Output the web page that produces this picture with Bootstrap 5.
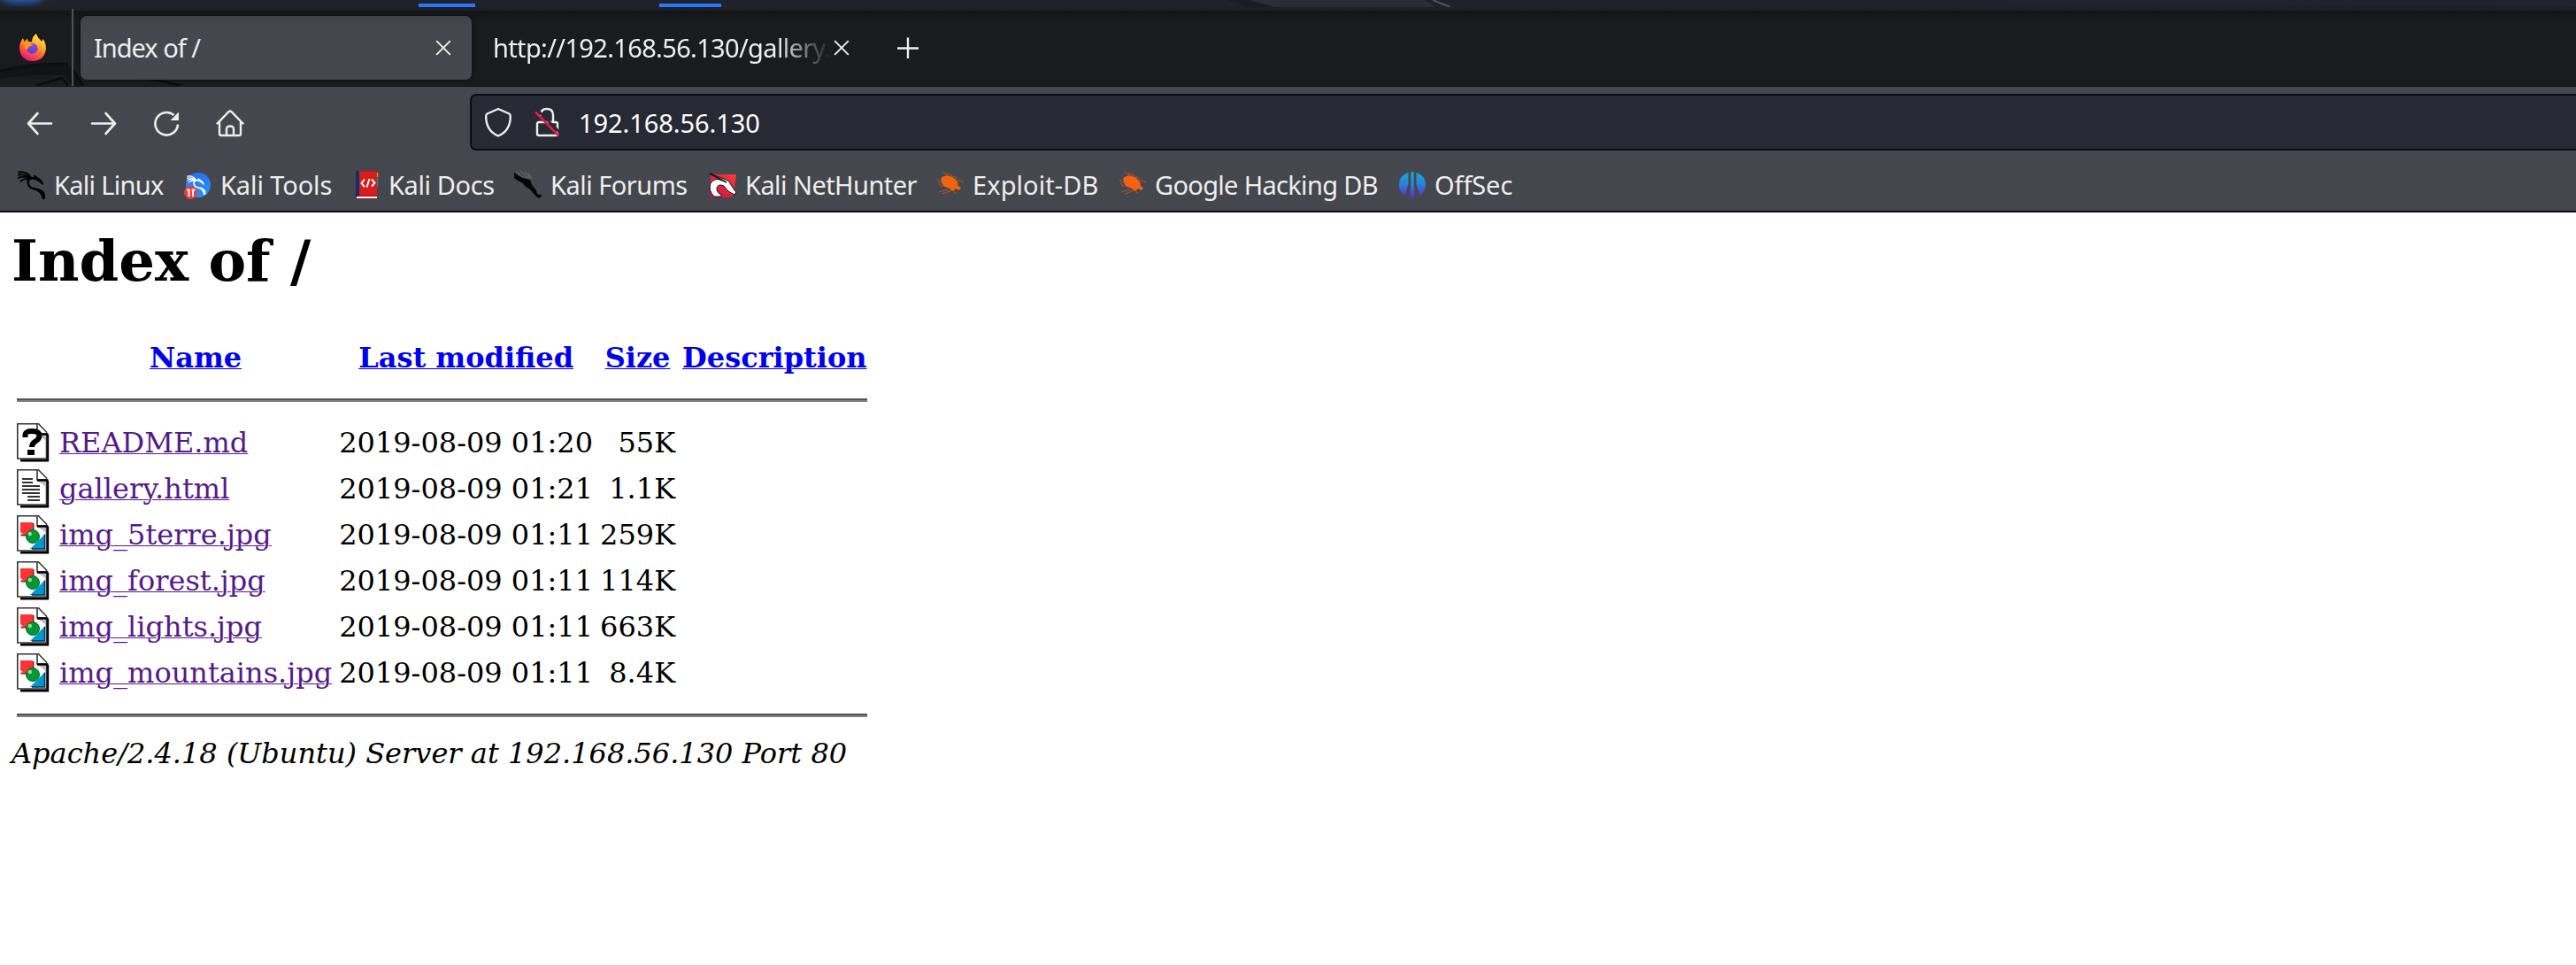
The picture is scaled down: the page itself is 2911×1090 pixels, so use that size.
<!DOCTYPE html>
<html lang="en">
<head>
<meta charset="utf-8">
<title>Index of /</title>
<link href="https://cdn.jsdelivr.net/npm/bootstrap@5.3.0/dist/css/bootstrap.min.css" rel="stylesheet">
<style>
body{background:#fff;color:#000;overflow:hidden}
.chrome{font-family:"Noto Sans","Open Sans",sans-serif;font-size:29px;line-height:36px;color:#eeeeec;white-space:nowrap}
.chrome svg{display:block;flex:none}
.desk{height:8px;background:linear-gradient(90deg,#20222b,#20202a 55%,#22222f)}
.edge{height:4px;background:#1f2023}
.tabs{height:86px;background:linear-gradient(#141519,#1a1b1f 14px);border-bottom:1px solid #101014;position:relative}
.wall{position:absolute;left:0;bottom:0}
.pin{width:83px;height:87px;margin-top:-2px;border-right:2px solid #515257;padding:28px 0 0 21px;position:relative}
.tabx{width:442px;height:72px;border-radius:7px;margin:6px 0 0 8px;background:linear-gradient(#404147,#44474d 12px);padding:0 23px 0 15px;box-shadow:0 0 5px #0008;position:relative;letter-spacing:-1px}
.tab2{height:72px;margin-top:6px;padding-left:24px}
.fade2{width:385px;overflow:hidden;-webkit-mask-image:linear-gradient(90deg,#000 320px,transparent 382px);mask-image:linear-gradient(90deg,#000 320px,transparent 382px);letter-spacing:-.66px}
.plus{margin-left:54px}
.tools{height:82px;background:#44474d;padding:8px 0 0 27px}
.navs{height:64px;width:504px;gap:35.5px}
.urlb{height:64px;border:2px solid #0c0d12;border-right:0;border-radius:7px 0 0 7px;background:#272935;color:#fff;padding-left:13px}
.urlb span{margin:2px 0 0 20px;letter-spacing:-.08px}
.marks{height:58px;background:#44474d;padding:0 0 1px 20px}
.rule{height:2px;background:#0c0c13}
.bm{gap:9px}
.bm:nth-child(1){width:188px;letter-spacing:-.7px}
.bm:nth-child(2){width:190px;letter-spacing:-.1px}
.bm:nth-child(3){width:183px;letter-spacing:-.4px}
.bm:nth-child(4){width:220px;letter-spacing:-.5px}
.bm:nth-child(5){width:257px;letter-spacing:-.56px}
.bm:nth-child(6){width:206px;letter-spacing:.08px}
.bm:nth-child(7){width:316px;letter-spacing:-.68px}
.bm:nth-child(8){letter-spacing:-.1px}
.page{font-family:"DejaVu Serif",serif;font-size:32px;line-height:38px;padding-left:13px}
.page h1{font-size:64px;font-weight:700;line-height:76px;margin:17px 0 43px}
.dir{border-collapse:separate;border-spacing:4px}
.dir td,.dir th{padding:2px;white-space:nowrap}
.dir svg,.blank{display:block;width:40px;height:44px}
.dir a{color:#551a8b;text-decoration:underline;text-decoration-thickness:1px}
.dir th a{color:#00e}
.dir hr{margin:16px 0;height:4px;opacity:1;border:0;border-top:2px solid #555;border-bottom:2px solid #808080}
</style>
</head>
<body>
<svg width="0" height="0" class="position-absolute">
<defs>
<linearGradient id="gf" x1=".8" y1="0" x2=".3" y2="1"><stop offset="0" stop-color="#fff44f"/><stop offset=".45" stop-color="#ff9a1f"/><stop offset=".75" stop-color="#ff4550"/><stop offset="1" stop-color="#e0107a"/></linearGradient>
<linearGradient id="go" gradientUnits="userSpaceOnUse" x1="0" y1="0" x2="0" y2="32"><stop offset="0" stop-color="#0cb4cf"/><stop offset=".5" stop-color="#2f7bd8"/><stop offset="1" stop-color="#6420c8"/></linearGradient>
<linearGradient id="gn" x1="1" y1="0" x2="0" y2="1"><stop offset="0" stop-color="#ff3a35"/><stop offset=".6" stop-color="#e0203c"/><stop offset="1" stop-color="#a8105c"/></linearGradient>
<linearGradient id="gt" x1="0" y1="0" x2="0" y2="1"><stop offset="0" stop-color="#2b6ff6"/><stop offset="1" stop-color="#2497ff"/></linearGradient>
<radialGradient id="gp" cx=".6" cy=".3" r=".7"><stop offset="0" stop-color="#a03cf0"/><stop offset="1" stop-color="#4a4ad0"/></radialGradient>
<symbol id="dragon" viewBox="0 0 32 32"><g fill="none" stroke="currentColor" stroke-linecap="round"><path d="M1 1.500C7 .5 12 3 15 7.500M.8 4.500C6 3.500 10 5 14 7.500M1 8C6 5.500 10 6.500 14 8.500M3.500 11.500C7 8.500 9 8.500 12 9.500" stroke-width="1.800"/><path d="M12 8C17 7.500 23 9 28 14.500M19 6L26.500 11.500" stroke-width="2.300"/><path d="M15 8.500C9 11 11.500 19.500 19.500 20.500C26 21.300 30.500 23.500 30 30.500M18 20C24 21 28 26 28.800 31" stroke-width="2.300"/></g></symbol>
<symbol id="spider" viewBox="0 0 32 32"><g stroke="#b4562a" stroke-width="1" fill="none"><path d="M7 1L15 7M11 2L20 7M1 9L5 14M3 24L13 21M7 26L18 22M20 23L22 26M24 10L31 13M20 6L24 9M2 14L7 18"/></g><path d="M5 9C8 4 15 5 20 8L24 12L25 17L28 19L26 22L22 20L19 23L15 20L8 17L6 13Z" fill="#f2620f"/></symbol>
<symbol id="sheet" viewBox="0 0 40 44"><path d="M4 42.200H34.800V13" fill="none" stroke="#000" stroke-width="2.800"/><path d="M.8 .8H24.500L33.500 10V40H.8Z" fill="#fff" stroke="#333" stroke-width="1.600"/><path d="M23 13L33 14V20L28 16Z" fill="#bbb"/><path d="M23 1V12H34" fill="#fff" stroke="#333" stroke-width="1.600"/><path d="M23 12.500H35.500" stroke="#000" stroke-width="2.500"/></symbol>
<symbol id="pic" viewBox="0 0 40 44"><use href="#sheet" width="40" height="44"/><path d="M4.500 22.500H18.500V9" stroke="#a01818" stroke-width="2" fill="none"/><path d="M4 8H18V22H8L4 19Z" fill="#f33"/><path d="M31.500 21.500V38H15Z" fill="#09c"/><path d="M31.500 21.500V38H17" fill="none" stroke="#036" stroke-width="1.300"/><circle cx="18" cy="24" r="7.500" fill="#093" stroke="#063" stroke-width="1"/><circle cx="14.800" cy="21" r="2.200" fill="#9d9"/></symbol>
</defs>
</svg>
<header class="chrome">
<div class="desk"><svg width="2911" height="8"><defs><filter id="bl" x="-30%" y="-200%" width="160%" height="500%"><feGaussianBlur stdDeviation="3"/></filter></defs><ellipse cx="25" cy="-2" rx="24" ry="6" fill="#2158a8" filter="url(#bl)"/><path d="M1388 0H1412L1440 8H1410Z" fill="#1b1b25"/><path d="M1412 0H1610L1622 8H1440Z" fill="#2d2b34"/><path d="M1619 0L1639 8" stroke="#51525a" stroke-width="2"/><path d="M473 4H537V8H473ZM745 4H815V8H745Z" fill="#2777ff"/></svg></div>
<div class="edge"></div>
<div class="tabs d-flex">
<svg class="wall" width="230" height="27" viewBox="0 0 230 27"><path d="M0 12Q35 3 77 3L93 27H0Z" fill="#121317"/><path d="M0 10Q35 2 77 2" stroke="#0d0e11" stroke-width="3" fill="none"/><path d="M0 19Q35 14 73 15L81 27H0Z" fill="#1b1c20"/><path d="M40 27L70 18L77 27M82 8L94 27M155 18Q182 20 204 27" stroke="#0d0e11" stroke-width="3" fill="none"/></svg>
<div class="pin"><svg width="32" height="32" viewBox="0 0 32 32"><path d="M1 15C1 11 3 8 5 5L6.500 9L10 5.500L11 9H15C15 5 17 2 20 0C21 4 24 6 26 9L27.500 6C30 9 31 13 31 17C30 26 24 31 16 31C7 31 1 25 1 15Z" fill="url(#gf)"/><circle cx="15.500" cy="16.500" r="6.200" fill="url(#gp)"/><path d="M5 11C8 9 11 11 16 11.500C16 14 13 14 11 15.500L10 18C7 17 6 14 5 11Z" fill="#ff980e"/><path d="M16 9C20 8 23 12 22 16C21 13 19 11 16 11Z" fill="#ffbd30"/></svg></div>
<div class="tabx d-flex align-items-center justify-content-between"><span>Index of /</span><svg width="18" height="18" viewBox="0 0 18 18" stroke="#eeeeec" stroke-width="1.900"><path d="M1.200 1.200L16.800 16.800M16.800 1.200L1.200 16.800"/></svg></div>
<div class="tab2 d-flex align-items-center"><span class="fade2">http://192.168.56.130/gallery.</span><svg width="18" height="18" viewBox="0 0 18 18" stroke="#eeeeec" stroke-width="1.900"><path d="M1.200 1.200L16.800 16.800M16.800 1.200L1.200 16.800"/></svg><svg class="plus" width="24" height="24" viewBox="0 0 24 24" stroke="#eeeeec" stroke-width="2.400"><path d="M0 12.500H24M12 .5V24"/></svg></div>
</div>
<div class="tools d-flex">
<div class="navs d-flex align-items-center flex-shrink-0">
<svg width="36" height="36" viewBox="0 0 36 36" fill="none" stroke="#eeeeec" stroke-width="2.600" stroke-linecap="round" stroke-linejoin="round"><path d="M31 19.500H5M15.500 8L5 19.500L15.500 31"/></svg>
<svg width="36" height="36" viewBox="0 0 36 36" fill="none" stroke="#eeeeec" stroke-width="2.600" stroke-linecap="round" stroke-linejoin="round"><path d="M5 19.500H31M20.500 8L31 19.500L20.500 31"/></svg>
<svg width="36" height="36" viewBox="0 0 36 36"><path d="M31 20.500A12.800 12.800 0 1 1 26.500 10" fill="none" stroke="#eeeeec" stroke-width="2.600"/><path d="M32 6.500V16H22.500Z" fill="#eeeeec"/></svg>
<svg width="36" height="36" viewBox="0 0 36 36" fill="none" stroke="#eeeeec" stroke-width="2.400" stroke-linecap="round" stroke-linejoin="round"><path d="M3.500 19.500L16.500 6.200Q18 5 19.500 6.200L32.500 19.500M6 17.500V31Q6 33 8 33H28Q30 33 30 31V17.500M14 33V26Q14 22.500 18 22.500T22 26V33"/></svg>
</div>
<div class="urlb d-flex align-items-center flex-grow-1">
<svg width="34" height="36" viewBox="0 0 34 36" fill="none" stroke="#eeeeec" stroke-width="2.400" stroke-linejoin="round"><path d="M17 3L29.500 8.500Q31 9.300 30.800 12Q30.500 28 17 33.500Q3.500 28 3.200 12Q3 9.300 4.500 8.500Z"/></svg>
<svg class="ms-4" width="30" height="36" viewBox="0 0 30 36" fill="none"><path d="M7 11V10Q7 3 14 3T21 10V17M4 33H24Q26 33 26 31V20Q26 18 24 18H5Q3 18 3 20V31Q3 33 5 33" stroke="#eeeeec" stroke-width="2.400"/><path d="M3 4L30 31" stroke="#272935" stroke-width="3"/><path d="M1 6.500L27.500 33.500" stroke="#ec1443" stroke-width="2.600"/></svg>
<span>192.168.56.130</span>
</div>
</div>
<nav class="marks d-flex align-items-center">
<div class="bm d-flex align-items-center"><svg width="32" height="32" color="#000"><use href="#dragon"/></svg><span>Kali Linux</span></div>
<div class="bm d-flex align-items-center"><svg width="32" height="32" viewBox="0 0 32 32" color="#fff"><circle cx="16" cy="16" r="14" fill="url(#gt)"/><use href="#dragon" x="0" y="5" width="28" height="22"/><circle cx="7.500" cy="24.500" r="7.500" fill="#f03a3e"/><path d="M3 21.500H6.500M8.500 21.500H12.500M5.500 21V29M10 21V29" stroke="#fff" stroke-width="2"/></svg><span>Kali Tools</span></div>
<div class="bm d-flex align-items-center"><svg width="32" height="32" viewBox="0 0 32 32"><path d="M28 2H29.200V7H28Z" fill="#f90"/><path d="M28 8H29.200V13H28Z" fill="#1a9e50"/><path d="M28 13H29.200V18H28Z" fill="#2777ff"/><path d="M4 0H28V32H4Z" fill="#a80f14"/><path d="M8 .5H28V28H8Z" fill="#d81b1b"/><path d="M4 0H8V31H4Z" fill="#132d66"/><path d="M5 29H28V31H5Z" fill="#fff"/><path d="M14 9.500L10.500 14L14 18M22 9.500L25.500 13.500L22 17.500M19.500 9L16.500 18.500" stroke="#fff" stroke-width="2" fill="none"/></svg><span>Kali Docs</span></div>
<div class="bm d-flex align-items-center"><svg width="32" height="32" viewBox="0 0 32 32"><path d="M3 1L11 9M7 0L15 9M12 1L18 9M16 3L20 9" stroke="#606267" stroke-width="1.500"/><path d="M0 2L6 6L10 8L18 10L20 16L25 22L26 26L32 28L28 31L24 28L18 21L12 17L10 14L4 11L0 8Z" fill="#050505"/></svg><span>Kali Forums</span></div>
<div class="bm d-flex align-items-center"><svg width="32" height="32" viewBox="0 0 32 32"><path d="M2 4H31L28 27L24 30H1V24Z" fill="url(#gn)"/><path d="M1 3L22 11L29 22L31 24L29 27L22 23L17 17Q10 14 9 20Q9 25 14 27V29H6Q-1 22 2 14Q7 7 15 11L10 8Z" fill="#fff" stroke="#111" stroke-width="1"/><path d="M1 3L20 13" stroke="#111" stroke-width="1.600"/></svg><span>Kali NetHunter</span></div>
<div class="bm d-flex align-items-center"><svg width="32" height="32"><use href="#spider"/></svg><span>Exploit-DB</span></div>
<div class="bm d-flex align-items-center"><svg width="32" height="32"><use href="#spider"/></svg><span>Google Hacking DB</span></div>
<div class="bm d-flex align-items-center"><svg width="32" height="32" viewBox="0 0 32 32" fill="url(#go)"><path d="M11.500 2V15L7.500 28Q1 23 1 15.500Q1 5 11.500 2ZM20.500 2V15L24.500 28Q31 23 31 15.500Q31 5 20.500 2ZM14.500 1H17.500L18.500 31H13.500Z"/></svg><span>OffSec</span></div>
</nav>
<div class="rule"></div>
</header>
<main class="page">
<h1>Index of /</h1>
<table class="dir">
<tr><th><span class="blank"></span></th><th class="text-center"><a href="#">Name</a></th><th class="text-center"><a href="#">Last modified</a></th><th class="text-center"><a href="#">Size</a></th><th class="text-center"><a href="#">Description</a></th></tr>
<tr><td colspan="5"><hr></td></tr>
<tr><td><svg viewBox="0 0 40 44"><use href="#sheet"/><path d="M9.500 16V12.500Q10.500 9 17 9Q25.500 9 25.500 14Q25.500 18 21 20.500Q17 23 17 27" fill="none" stroke="#000" stroke-width="6"/><path d="M12 30H20V36H12Z"/></svg></td><td><a href="#">README.md</a></td><td>2019-08-09 01:20</td><td class="text-end">55K</td><td></td></tr>
<tr><td><svg viewBox="0 0 40 44"><use href="#sheet"/><path d="M6 11H18M6 15H18M6 19H26M6 23H26M6 27H26M12 31H26M12 35H26" stroke="#333" stroke-width="2"/></svg></td><td><a href="#">gallery.html</a></td><td>2019-08-09 01:21</td><td class="text-end">1.1K</td><td></td></tr>
<tr><td><svg><use href="#pic"/></svg></td><td><a href="#">img_5terre.jpg</a></td><td>2019-08-09 01:11</td><td class="text-end">259K</td><td></td></tr>
<tr><td><svg><use href="#pic"/></svg></td><td><a href="#">img_forest.jpg</a></td><td>2019-08-09 01:11</td><td class="text-end">114K</td><td></td></tr>
<tr><td><svg><use href="#pic"/></svg></td><td><a href="#">img_lights.jpg</a></td><td>2019-08-09 01:11</td><td class="text-end">663K</td><td></td></tr>
<tr><td><svg><use href="#pic"/></svg></td><td><a href="#">img_mountains.jpg</a></td><td>2019-08-09 01:11</td><td class="text-end">8.4K</td><td></td></tr>
<tr><td colspan="5"><hr></td></tr>
</table>
<address class="m-0 fst-italic">Apache/2.4.18 (Ubuntu) Server at 192.168.56.130 Port 80</address>
</main>
<script src="https://cdn.jsdelivr.net/npm/bootstrap@5.3.0/dist/js/bootstrap.bundle.min.js"></script>
</body>
</html>
